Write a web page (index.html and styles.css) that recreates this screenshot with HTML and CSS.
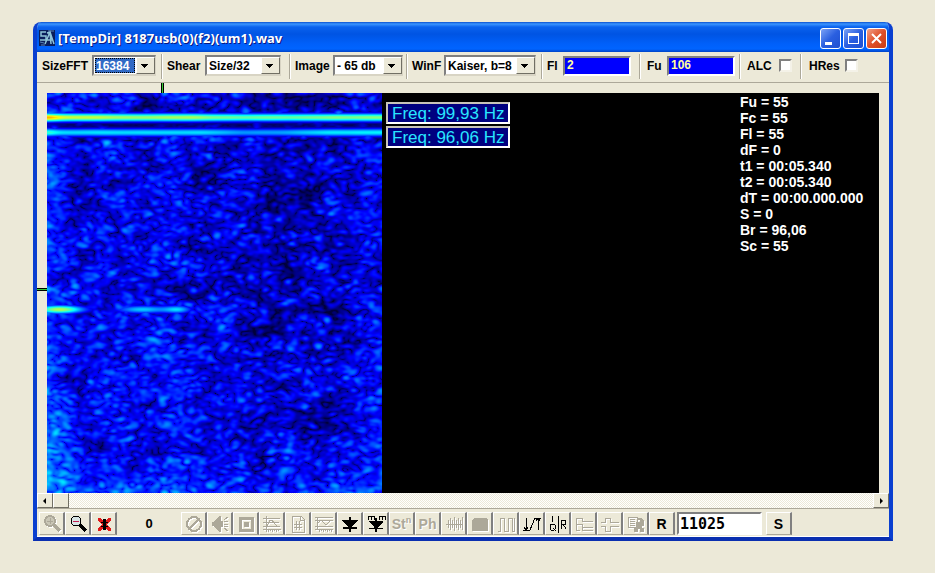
FILE: index.html
```
<!DOCTYPE html>
<html lang="en">
<head>
    <meta charset="UTF-8">
    <meta name="viewport" content="width=device-width, initial-scale=1.0">
    <title>[TempDir] 8187usb(0)(f2)(um1).wav</title>
    <link rel="stylesheet" href="styles.css">
</head>
<body>
    <main class="window">
        <!-- Title bar -->
        <header class="titlebar">
            <svg class="app-icon" viewBox="0 0 16 16">
                <rect width="16" height="16" fill="#0a1f5c"/>
                <path d="M7 2H2v4h5v4H1M8 3l3-1 1 12M6 14l5-12 4 12M8 10h6" fill="none" stroke="#8fc4d8" stroke-width="1.5"/>
                <path d="M1 12l4 1M9 1h6M2 15h4" stroke="#5b86b8"/>
            </svg>
            <h1>[TempDir] 8187usb(0)(f2)(um1).wav</h1>
            <button class="win-btn" aria-label="Minimize"><svg viewBox="0 0 19 19"><path d="M4 13h7v3H4z" fill="#fff"/></svg></button>
            <button class="win-btn" aria-label="Maximize"><svg viewBox="0 0 19 19"><path d="M4 4h11v11H4zM5 7v7h9V7z" fill="#fff" fill-rule="evenodd"/></svg></button>
            <button class="win-btn win-close" aria-label="Close"><svg viewBox="0 0 19 19"><path d="M5 5l9 9M14 5l-9 9" stroke="#fff" stroke-width="2"/></svg></button>
        </header>

        <!-- Analysis settings -->
        <div class="toolbar">
            <div class="group">
                <label for="sizefft">SizeFFT</label>
                <span class="combo combo-active w-64"><select id="sizefft"><option>16384</option></select></span>
            </div>
            <div class="group group-wide">
                <label for="shear">Shear</label>
                <span class="combo w-76"><select id="shear"><option>Size/32</option></select></span>
            </div>
            <div class="group group-tight">
                <label for="image">Image</label>
                <span class="combo w-70"><select id="image"><option>- 65 db</option></select></span>
            </div>
            <div class="group">
                <label for="winf">WinF</label>
                <span class="combo w-92"><select id="winf"><option>Kaiser, b=8</option></select></span>
            </div>
            <div class="group group-wide">
                <label for="fl">Fl</label>
                <input class="freq-input" id="fl" type="text" value="2">
            </div>
            <div class="group group-fu">
                <label for="fu">Fu</label>
                <input class="freq-input" id="fu" type="text" value="106">
            </div>
            <div class="group group-alc">
                <label for="alc">ALC</label>
                <input class="check" id="alc" type="checkbox">
            </div>
            <div class="group group-last">
                <label for="hres">HRes</label>
                <input class="check" id="hres" type="checkbox">
            </div>
        </div>

        <!-- Spectrogram -->
        <section class="view">
            <span class="marker marker-time"></span>
            <span class="marker marker-freq"></span>
            <div class="plot">
                <canvas id="spectrum" width="335" height="400"></canvas>
                <div class="tags">
                    <span class="tag">Freq: 99,93 Hz</span>
                    <span class="tag">Freq: 96,06 Hz</span>
                </div>
                <ul class="readout">
                    <li>Fu = 55</li>
                    <li>Fc = 55</li>
                    <li>Fl = 55</li>
                    <li>dF = 0</li>
                    <li>t1 = 00:05.340</li>
                    <li>t2 = 00:05.340</li>
                    <li>dT = 00:00.000.000</li>
                    <li>S = 0</li>
                    <li>Br = 96,06</li>
                    <li>Sc = 55</li>
                </ul>
            </div>
        </section>

        <div class="scrollbar">
            <button class="scroll-btn" aria-label="Scroll left"><svg viewBox="0 0 8 8"><path d="M5 1v6L2 4z"/></svg></button>
            <span class="thumb"></span>
            <button class="scroll-btn scroll-right" aria-label="Scroll right"><svg viewBox="0 0 8 8"><path d="M3 1v6l3-3z"/></svg></button>
        </div>

        <!-- Tools -->
        <footer class="tools">
            <button class="tool off" aria-label="Zoom in"><svg viewBox="0 0 20 20"><circle cx="8" cy="7" r="5" fill="#c9c6b6" stroke="currentColor" stroke-width="2"/><path d="M5 7h6M8 4v6" stroke="currentColor"/><path d="M12 11l6 6" stroke="currentColor" stroke-width="3"/></svg></button>
            <button class="tool" aria-label="Zoom out"><svg viewBox="0 0 20 20"><circle cx="8" cy="7" r="5" fill="#d8e4e4" stroke="currentColor" stroke-width="1"/><path d="M5 7h6" stroke="#c22050" stroke-width="1"/><path d="M12 11l6 6" stroke="currentColor" stroke-width="3"/></svg></button>
            <button class="tool" aria-label="Clear"><svg viewBox="0 0 20 20"><path d="M4 4h3l10 11v2h-3L4 6zM14 4h3v2L7 17H4v-2z" fill="#e01818"/><path d="M9 5h3v11H9zM7 8h7v1H7zM7 12h7v1H7z"/></svg></button>
            <output class="counter">0</output>
            <button class="tool off" aria-label="None"><svg viewBox="0 0 20 20"><circle cx="10" cy="10" r="7" fill="none" stroke="currentColor" stroke-width="2"/><path d="M5 15L15 5" stroke="currentColor" stroke-width="2"/></svg></button>
            <button class="tool off" aria-label="Play"><svg viewBox="0 0 20 20"><path d="M2 8h2l5-6h2v16H9l-5-6H2z" fill="currentColor"/><path d="M12 7v6" stroke="currentColor" stroke-width="2"/><path d="M14 6l4-3M14 8l4-1M14 10h4M14 12l4 1M14 14l4 3" stroke="currentColor"/></svg></button>
            <button class="tool off" aria-label="Stop"><svg viewBox="0 0 20 20"><path d="M3 3h15v15H3zM6 6v9h9V6zM8 8h5v5H8z" fill="currentColor" fill-rule="evenodd"/></svg></button>
            <button class="tool off" aria-label="Spectrum"><svg viewBox="0 0 20 20"><path d="M1 4h17M1 8h16M1 12h17M1 15h18M4 2v16M2 13c5 0 4-7 7-7s3 6 8 7M6 15v3M8 15v2M10 15v3M12 15v2M14 15v3M16 15v2" fill="none" stroke="currentColor"/></svg></button>
            <button class="tool off" aria-label="Grid values"><svg viewBox="0 0 20 20"><path d="M4 2h9l3 3v13H4zM12 2v4h4M9 7l-1 9M12 7l-1 9M6 10h8M6 13h8" fill="none" stroke="currentColor"/></svg></button>
            <button class="tool off" aria-label="Average"><svg viewBox="0 0 20 20"><path d="M1 3h18M3 3v12M1 6h18M3 10l4-4 5 5 5-5M1 12h18M1 15h18M5 15v3M7 15v2M9 15v3M11 15v2M13 15v3M15 15v2M17 15v3" fill="none" stroke="currentColor"/></svg></button>
            <button class="tool" aria-label="Marker down"><svg viewBox="0 0 20 20"><path d="M9 3h2v3h7v1l-6 5v1h5v2h-6v3H9v-3H3v-2h5v-1L2 7V6h7z"/></svg></button>
            <button class="tool" aria-label="Marker range"><svg viewBox="0 0 20 20"><path d="M2 6V2h6v4M5 2v4M13 6V2h6v4M16 2v4" fill="none" stroke="currentColor"/><path d="M9 4h2v3h6v1l-5 5v1h5v1h-6v3H9v-3H3v-1h5v-1L3 8V7h6z"/></svg></button>
            <button class="tool text off">St<sup>n</sup></button>
            <button class="tool text off">Ph</button>
            <button class="tool off" aria-label="Wave"><svg viewBox="0 0 20 20"><path d="M2 10h17M4 6v8M6 4v12M8 6v8M10 3v14M12 6v8M14 4v12M16 6v8M18 3v13" stroke="currentColor"/></svg></button>
            <button class="tool off" aria-label="Fill"><svg viewBox="0 0 20 20"><path d="M4 4h12l2 2v11H2V6z" fill="currentColor"/></svg></button>
            <button class="tool off" aria-label="Pulses"><svg viewBox="0 0 20 20"><path d="M2 17h2V4h4v13h4V4h4v13h2V4" fill="none" stroke="currentColor"/></svg></button>
            <button class="tool" aria-label="Levels"><svg viewBox="0 0 20 20"><path d="M4 4v12M2 13l2 3 2-3M1 16h7l5-12h6M16 5v11M14 7l2-3 2 3" fill="none" stroke="currentColor"/></svg></button>
            <button class="tool" aria-label="IQ"><svg viewBox="0 0 20 20"><path d="M4 2v6M10 2v17M2 11l1-1h3l1 1v4l-1 1H3l-1-1zM5 14l3 3M13 15V6h4v4h-4M15 10l3 5" fill="none" stroke="currentColor"/></svg></button>
            <button class="tool off" aria-label="Step low"><svg viewBox="0 0 20 20"><path d="M2 10V4h6v3h11M2 10h6v6h11M8 13h11M2 10v6h4" fill="none" stroke="currentColor"/></svg></button>
            <button class="tool off" aria-label="Step high"><svg viewBox="0 0 20 20"><path d="M1 8h4V4h5v4h9M1 12h4v5h5v-5h9" fill="none" stroke="currentColor"/></svg></button>
            <button class="tool off" aria-label="Save"><svg viewBox="0 0 20 20"><path d="M2 3h9v10H2zM4 5h5M4 7h5M4 9h5M4 11h5" fill="none" stroke="currentColor"/><path d="M11 4h4l3 3v5h-2v2h2v4h-4v-3h-2v3H8v-5h2V8h4V6h-3z" fill="currentColor"/></svg></button>
            <button class="tool text">R</button>
            <input class="rate" type="text" value="11025" aria-label="Sample rate">
            <button class="tool text">S</button>
        </footer>
    </main>
    <script src="script.js"></script>
</body>
</html>
```
FILE: styles.css
```
* {
    box-sizing: border-box;
}

body {
    margin: 0;
    padding: 22px 42px 32px 33px;
    background: #ece9d8;
    color: #000;
    font-family: "Liberation Sans", Arial, sans-serif;
    font-size: 12px;
    font-weight: bold;
}

button, input, select {
    margin: 0;
    padding: 0;
    border: 0;
    border-radius: 0;
    color: inherit;
    font: inherit;
}

.window {
    border: 4px solid #0a3fd0;
    border-top: 0;
    border-bottom-color: #0a2fb0;
    border-radius: 8px 8px 0 0;
    background: #ece9d8;
    overflow: hidden;
    min-width: 860px;
    box-shadow: inset 0 -1px #fff;
}

/* Title bar */
.titlebar {
    display: flex;
    align-items: center;
    gap: 2px;
    height: 30px;
    margin: 0 -4px;
    padding: 2px 6px 0 6px;
    background: linear-gradient(#0a50d0 0, #3a95ff 2px, #0a62ee 5px, #0054e3 12px, #0060fa 22px, #0064ff 27px, #0044c8 30px);
}

.app-icon {
    width: 16px;
    height: 16px;
}

.titlebar h1 {
    flex: 1;
    margin: 0 0 0 1px;
    color: #fff;
    font-family: "Noto Sans", sans-serif;
    font-size: 13px;
    line-height: 16px;
    text-shadow: 1px 1px #0a1883;
    white-space: nowrap;
}

.win-btn {
    width: 21px;
    height: 21px;
    border: 1px solid #fff;
    border-radius: 3px;
    background: linear-gradient(135deg, #7ba2f5, #2a5fe0 50%, #1f50d0);
}

.win-close {
    background: linear-gradient(135deg, #f0a088, #e0502a 50%, #c83c14);
}

.win-btn svg {
    display: block;
    width: 19px;
    height: 19px;
}

/* Settings row */
.toolbar {
    display: grid;
    grid-template-columns: 125px 128px 117px 135px 98px 100px 61px 1fr;
    padding: 2px 0 3px;
    border-bottom: 1px solid #aca899;
}

.group {
    display: flex;
    align-items: center;
    height: 25px;
    padding: 0 5px 2px;
    border-right: 1px solid #aca899;
    box-shadow: 1px 0 #fff;
}

.group-wide {
    padding-right: 8px;
}

.group-tight {
    padding-right: 3px;
}

.group-fu {
    padding-left: 7px;
    padding-right: 4px;
}

.group-alc {
    padding-left: 7px;
    padding-right: 8px;
}

.group-last {
    border: 0;
    box-shadow: none;
    padding-left: 8px;
}

.group label {
    flex: 1;
    white-space: nowrap;
}

.group-last label {
    flex: none;
    width: 36px;
}

.combo {
    display: flex;
    height: 21px;
    border: 2px solid;
    border-color: #808080 #d8d4c4 #d8d4c4 #808080;
    border-right-width: 1px;
    background: #fff;
}

.combo select {
    flex: 1;
    min-width: 0;
    padding-left: 2px;
    background: #fff;
    appearance: none;
    white-space: nowrap;
}

.combo::after {
    content: "";
    width: 17px;
    border: 1px solid;
    border-color: #fff #716f64 #716f64 #fff;
    background: linear-gradient(#000, #000) 4px 6px / 7px 1px no-repeat,
        linear-gradient(#000, #000) 5px 7px / 5px 1px no-repeat,
        linear-gradient(#000, #000) 6px 8px / 3px 1px no-repeat,
        linear-gradient(#000, #000) 7px 9px / 1px 1px no-repeat,
        #ece9d8;
}

.combo-active select {
    margin: 1px;
    padding-left: 1px;
    background: #316ac5;
    color: #fff;
    outline: 1px dotted #000;
    outline-offset: -1px;
}

.w-64 { width: 64px; }
.w-70 { width: 70px; }
.w-76 { width: 76px; }
.w-92 { width: 92px; }

.freq-input {
    width: 68px;
    height: 20px;
    padding: 0 2px 2px;
    border: 2px solid;
    border-color: #808080 #fff #fff #808080;
    background: #00f;
    color: #ffffa0;
}

.check {
    width: 13px;
    height: 13px;
    border: 2px solid;
    border-color: #808080 #f4f2e8 #f4f2e8 #808080;
    background: #fff;
    appearance: none;
}

/* Spectrogram */
.view {
    position: relative;
    padding: 10px 10px 0;
}

.plot {
    display: flex;
    background: #000;
}

.plot canvas {
    flex: none;
}

.marker {
    position: absolute;
    background: #3c3;
    border: solid #000;
}

.marker-time {
    top: 0;
    left: 124px;
    width: 3px;
    height: 10px;
    border-width: 0 1px;
}

.marker-freq {
    top: 205px;
    left: 0;
    width: 10px;
    height: 3px;
    border-width: 1px 0;
}

.tags {
    display: flex;
    flex-direction: column;
    gap: 2px;
    padding: 9px 0 0 4px;
}

.tag {
    padding: 1px 4px 0;
    border: 2px solid;
    border-color: #c8c4b8 #fff #fff #c8c4b8;
    background: #000080;
    color: #29e6ff;
    font-size: 17px;
    font-weight: normal;
    line-height: 17px;
    white-space: nowrap;
}

.readout {
    width: 139px;
    margin: 0 0 0 auto;
    padding: 1px 0 0;
    list-style: none;
    color: #fff;
    font-size: 14px;
    line-height: 16px;
    white-space: nowrap;
}

/* Scroll bar */
.scrollbar {
    display: flex;
    height: 15px;
    background: repeating-conic-gradient(#fff 0 25%, #ece9d8 0 50%) 0 0 / 2px 2px;
}

.scroll-btn, .thumb {
    width: 16px;
    border: 1px solid;
    border-color: #fff #716f64 #716f64 #fff;
    background: #ece9d8;
}

.scroll-btn svg {
    display: block;
    width: 8px;
    height: 8px;
    margin: auto;
}

.scroll-right {
    margin-left: auto;
}

/* Tool row */
.tools {
    display: flex;
    align-items: center;
    padding: 3px 2px 2px;
    border-top: 1px solid #aca899;
}

.tool {
    flex: none;
    width: 26px;
    height: 23px;
    border: 1px solid;
    border-color: #fff #808080 #aca899 #fff;
    border-right-width: 2px;
    background: #ece9d8;
}

.tool svg {
    display: block;
    width: 20px;
    height: 20px;
    margin: 0 auto;
    shape-rendering: crispEdges;
}

.off {
    color: #aca899;
}

.off svg {
    filter: drop-shadow(1px 1px #fff);
}

.tool.text {
    font-size: 14px;
}

.text.off {
    text-shadow: 1px 1px #fff;
}

.tool sup {
    font-size: 9px;
    line-height: 0;
}

.counter {
    width: 64px;
    text-align: center;
    font-size: 13px;
}

.rate {
    width: 85px;
    height: 23px;
    margin: 0 4px 0 2px;
    padding: 0 1px;
    border: 2px solid;
    border-color: #808080 #fff #fff #808080;
    background: #fff;
    font-family: "DejaVu Sans Mono", monospace;
    font-size: 15px;
}
```
FILE: script.js
```
const canvas = document.getElementById('spectrum');
const ctx = canvas.getContext('2d');
const W = canvas.width;
const H = canvas.height;

let seed = 8187;

function random() {
    seed = (seed * 1664525 + 1013904223) % 4294967296;
    return (seed + 1) / 4294967297;
}

function gauss() {
    return Math.sqrt(-2 * Math.log(random())) * Math.cos(2 * Math.PI * random());
}

// blur along one axis, then normalise so the field keeps unit variance
function blur(src, sigma, step, count, pos) {
    const r = Math.ceil(sigma * 3);
    const kernel = [];
    let norm = 0;
    for (let k = -r; k <= r; k++) {
        const v = Math.exp(-k * k / (2 * sigma * sigma));
        kernel.push(v);
        norm += v * v;
    }
    norm = Math.sqrt(norm);
    return src.map((_, i) => {
        const p = pos(i);
        let sum = 0;
        for (let k = -r; k <= r; k++) {
            const q = (p + k + count) % count;
            sum += src[i + (q - p) * step] * kernel[k + r];
        }
        return sum / norm;
    });
}

function field(sx, sy) {
    let f = new Float32Array(W * H).map(gauss);
    f = blur(f, sx, 1, W, i => i % W);
    return blur(f, sy, W, H, i => Math.floor(i / W));
}

function bump(d, s) {
    return Math.exp(-d * d / (2 * s * s));
}

const stops = [
    [0, 0, 0, 60],
    [0.14, 0, 0, 255],
    [0.38, 0, 255, 255],
    [0.62, 255, 255, 0],
    [0.87, 255, 0, 0],
    [1, 128, 0, 0]
];

function palette(v) {
    v = Math.max(0, Math.min(1, v));
    let i = 1;
    while (v > stops[i][0]) i++;
    const a = stops[i - 1], b = stops[i];
    const t = (v - a[0]) / (b[0] - a[0]);
    return [1, 2, 3].map(c => a[c] + (b[c] - a[c]) * t);
}

const re = field(3, 2);
const im = field(3, 2);
const drift = field(9, 6);
const image = ctx.createImageData(W, H);

for (let y = 0; y < H; y++) {
    for (let x = 0; x < W; x++) {
        const i = y * W + x;
        const mag = Math.hypot(re[i], im[i]);

        // noise floor: louder at the left edge and at the bottom
        let v = 0.082 + 0.11 * Math.log10(mag + 0.08) + 0.02 * drift[i];
        v += 0.035 * Math.max(0, mag - 1.2);
        v += 0.08 * bump(x, 14) + 0.03 * bump(x - 70, 14) + 0.025 * bump(x - 120, 16);
        v += 0.02 * bump(x - 320, 14) + 0.035 * y / H + 0.03 * bump(y - H, 25);
        v -= 0.018 * bump(x - 245, 45);

        // carriers
        const top = 0.45 + 0.12 * bump(x, 110) + 0.12 * bump(x, 8) + 0.04 * bump(x - 135, 15) + 0.05 * bump(x - 320, 40) + 0.008 * drift[i];
        const second = 0.33 + 0.03 * bump(x - 60, 60) + 0.08 * bump(x, 6) + 0.05 * bump(x - 320, 30) - 0.05 * bump(x - 210, 30) + 0.008 * drift[i];
        const weak = 0.55 * bump(x - 12, 18) + 0.33 * bump(x - 95, 20) + 0.28 * bump(x - 131, 10);
        v *= 1 - 0.5 * bump(y - 31, 3);
        v = Math.max(v, top * bump(y - 24, 3), second * bump(y - 39, 3), weak * bump(y - 216, 3));

        const c = palette(v);
        image.data.set([c[0], c[1], c[2], 255], i * 4);
    }
}

ctx.putImageData(image, 0, 0);
```
